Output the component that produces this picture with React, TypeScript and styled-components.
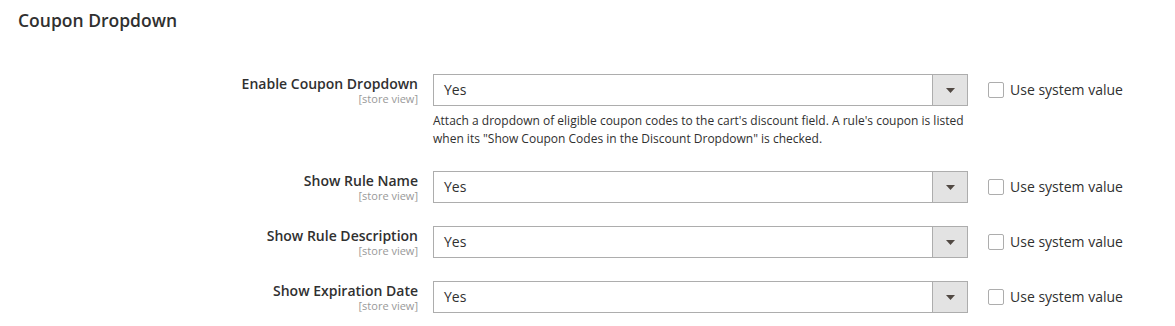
import React from "react";
import styled, { createGlobalStyle } from "styled-components";

const GlobalStyle = createGlobalStyle`
  body {
    margin: 0;
    background: #fff;
    font-family: "Open Sans", "Liberation Sans", sans-serif;
    color: #303030;
  }
`;

type Field = {
  label: string,
  note?: string[],
};

const fields: Field[] = [
  {
    label: "Enable Coupon Dropdown",
    note: [
      "Attach a dropdown of eligible coupon codes to the cart's discount field. A rule's coupon is listed",
      "when its \"Show Coupon Codes in the Discount Dropdown\" is checked.",
    ],
  },
  { label: "Show Rule Name" },
  { label: "Show Rule Description" },
  { label: "Show Expiration Date" },
];

const Caret = () => (
  <svg width="9" height="5" viewBox="0 0 9 5">
    <path d="M0 0 L9 0 L4.5 5 Z" fill="#514943" />
  </svg>
);

const App: React.FC = () => {
  return (
    <>
      <GlobalStyle />
      <StyledSection>
        <StyledTitle>Coupon Dropdown</StyledTitle>
        <StyledFieldList>
          {fields.map((f) => (
            <StyledRow key={f.label}>
              <StyledLabelCell>
                <StyledLabel>{f.label}</StyledLabel>
                <StyledScope>[store view]</StyledScope>
              </StyledLabelCell>
              <StyledValueCell>
                <StyledSelect>
                  <StyledSelectText>Yes</StyledSelectText>
                  <StyledSelectButton>
                    <Caret />
                  </StyledSelectButton>
                </StyledSelect>
                {f.note && (
                  <StyledNote>
                    {f.note.map((line) => (
                      <div key={line}>{line}</div>
                    ))}
                  </StyledNote>
                )}
              </StyledValueCell>
              <StyledUseDefault>
                <StyledCheckbox />
                <span>Use system value</span>
              </StyledUseDefault>
            </StyledRow>
          ))}
        </StyledFieldList>
      </StyledSection>
    </>
  );
};

export default App;

const StyledSection = styled.div`
  width: 1175px;
  height: 326px;
  overflow: hidden;
`;
const StyledTitle = styled.h2`
  margin: 0;
  padding: 9px 0 0 18px;
  font-size: 17.5px;
  font-weight: 600;
  line-height: 23px;
  color: #303030;
`;
const StyledFieldList = styled.div`
  display: flex;
  flex-direction: column;
  gap: 23px;
  margin-top: 42px;
`;
const StyledRow = styled.div`
  display: grid;
  grid-template-columns: 418px 535px auto;
  column-gap: 15px;
  align-items: start;
`;
const StyledLabelCell = styled.div`
  display: flex;
  flex-direction: column;
  align-items: flex-end;
  padding-top: 1px;
`;
const StyledLabel = styled.div`
  font-size: 14px;
  font-weight: 600;
  line-height: 17px;
  color: #303030;
`;
const StyledScope = styled.div`
  font-size: 11px;
  line-height: 13px;
  color: #999;
`;
const StyledValueCell = styled.div`
  display: flex;
  flex-direction: column;
`;
const StyledSelect = styled.div`
  display: flex;
  height: 32px;
  box-sizing: border-box;
  border: 1px solid #adadad;
  background: #fff;
`;
const StyledSelectText = styled.div`
  flex: 1;
  padding-left: 10px;
  font-size: 14px;
  line-height: 30px;
  color: #303030;
`;
const StyledSelectButton = styled.div`
  width: 34px;
  border-left: 1px solid #adadad;
  background: #e3e3e3;
  display: flex;
  align-items: center;
  justify-content: center;
`;
const StyledNote = styled.div`
  margin-top: 6px;
  font-size: 12px;
  line-height: 18px;
  color: #303030;
`;
const StyledUseDefault = styled.label`
  display: flex;
  align-items: center;
  gap: 6px;
  height: 31px;
  margin-left: 5px;
  font-size: 14px;
  color: #303030;
`;
const StyledCheckbox = styled.span`
  width: 14px;
  height: 14px;
  border: 1px solid #adadad;
  border-radius: 2px;
  background: #fff;
`;
